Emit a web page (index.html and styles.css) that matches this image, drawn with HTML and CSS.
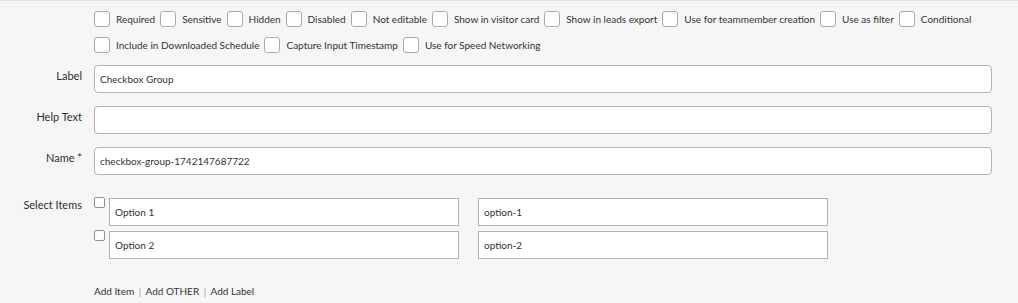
FILE: index.html
```html
<!DOCTYPE html>
<html lang="en">
<head>
  <meta charset="UTF-8" />
  <title>Checkbox Group</title>
  <link rel="stylesheet" href="styles.css">
</head>
<body>

  <div class="form">
    <div class="row">
      <div class="row-label"></div>
      <div class="flags">
        <div class="flag-line">
          <label class="flag"><input type="checkbox"><span>Required</span></label>
          <label class="flag"><input type="checkbox"><span>Sensitive</span></label>
          <label class="flag"><input type="checkbox"><span>Hidden</span></label>
          <label class="flag"><input type="checkbox"><span>Disabled</span></label>
          <label class="flag"><input type="checkbox"><span>Not editable</span></label>
          <label class="flag"><input type="checkbox"><span>Show in visitor card</span></label>
          <label class="flag"><input type="checkbox"><span>Show in leads export</span></label>
          <label class="flag"><input type="checkbox"><span>Use for teammember creation</span></label>
          <label class="flag"><input type="checkbox"><span>Use as filter</span></label>
          <label class="flag"><input type="checkbox"><span>Conditional</span></label>
        </div>
        <div class="flag-line">
          <label class="flag"><input type="checkbox"><span>Include in Downloaded Schedule</span></label>
          <label class="flag"><input type="checkbox"><span>Capture Input Timestamp</span></label>
          <label class="flag"><input type="checkbox"><span>Use for Speed Networking</span></label>
        </div>
      </div>
    </div>

    <div class="row field">
      <div class="row-label">Label</div>
      <input class="text-input" type="text" value="Checkbox Group">
    </div>

    <div class="row field">
      <div class="row-label">Help Text</div>
      <input class="text-input" type="text" value="">
    </div>

    <div class="row field">
      <div class="row-label">Name *</div>
      <input class="text-input" type="text" value="checkbox-group-1742147687722">
    </div>

    <div class="row items">
      <div class="row-label">Select Items</div>
      <div class="item-list">
        <div class="item">
          <input class="item-check" type="checkbox">
          <input class="item-input" type="text" value="Option 1">
          <input class="item-input" type="text" value="option-1">
        </div>
        <div class="item">
          <input class="item-check" type="checkbox">
          <input class="item-input" type="text" value="Option 2">
          <input class="item-input" type="text" value="option-2">
        </div>
      </div>
    </div>

    <div class="row">
      <div class="row-label"></div>
      <div class="actions">
        <a href="#">Add Item</a>
        <span class="sep">|</span>
        <a href="#">Add OTHER</a>
        <span class="sep">|</span>
        <a href="#">Add Label</a>
      </div>
    </div>
  </div>

</body>
</html>
```

FILE: styles.css
```css
/* ---------------- GENERAL ---------------- */
body, html {
  margin: 0;
  height: 100%;
  background: #f6f6f6;
  font-family: 'Lato', 'Open Sans', sans-serif;
  font-size: 10px;
  color: #333;
}

body {
  border-top: 1px solid #e2e2e2;
  box-sizing: border-box;
}

.form {
  padding-top: 10px;
  padding-right: 26px;
}

.row {
  display: flex;
  align-items: flex-start;
}

.row-label {
  flex: 0 0 82px;
  margin-right: 12px;
  text-align: right;
  font-size: 11px;
  line-height: 14px;
  color: #2e2e2e;
}

/* ---------------- FLAGS ---------------- */
.flags {
  display: flex;
  flex-direction: column;
  gap: 10px;
  margin-bottom: 12px;
}

.flag-line {
  display: flex;
  align-items: center;
  height: 16px;
}

.flag {
  display: flex;
  align-items: center;
  margin-right: 5px;
  white-space: nowrap;
}

.flag input {
  appearance: none;
  margin: 0 6px 0 0;
  width: 16px;
  height: 16px;
  border: 1px solid #a9a9a9;
  border-radius: 3px;
  background: #fff;
}

/* ---------------- TEXT FIELDS ---------------- */
.field {
  margin-bottom: 13px;
}

.field .row-label {
  padding-top: 4px;
}

.text-input {
  flex: 1;
  box-sizing: border-box;
  height: 28px;
  padding: 0 5px;
  border: 1px solid #b3b3b3;
  border-radius: 4px;
  background: #fff;
  font: inherit;
  color: #333;
  outline: none;
}

/* ---------------- ITEMS ---------------- */
.items {
  margin-top: 22px;
}

.items .row-label {
  padding-top: 1px;
}

.item-list {
  display: flex;
  flex-direction: column;
  gap: 4px;
}

.item {
  display: flex;
  align-items: flex-start;
}

.item-check {
  appearance: none;
  margin: 0 4px 0 0;
  width: 11px;
  height: 11px;
  border: 1px solid #8f8f8f;
  border-radius: 2px;
  background: #fff;
}

.item-input {
  box-sizing: border-box;
  width: 350px;
  height: 28px;
  margin-top: 1px;
  margin-right: 19px;
  padding: 0 5px;
  border: 1px solid #b3b3b3;
  background: #fff;
  font: inherit;
  color: #333;
  outline: none;
}

/* ---------------- ACTIONS ---------------- */
.actions {
  margin-top: 25px;
  line-height: 14px;
}

.actions a {
  color: #333;
  text-decoration: none;
}

.actions .sep {
  color: #999;
  margin: 0 2px;
}
```
